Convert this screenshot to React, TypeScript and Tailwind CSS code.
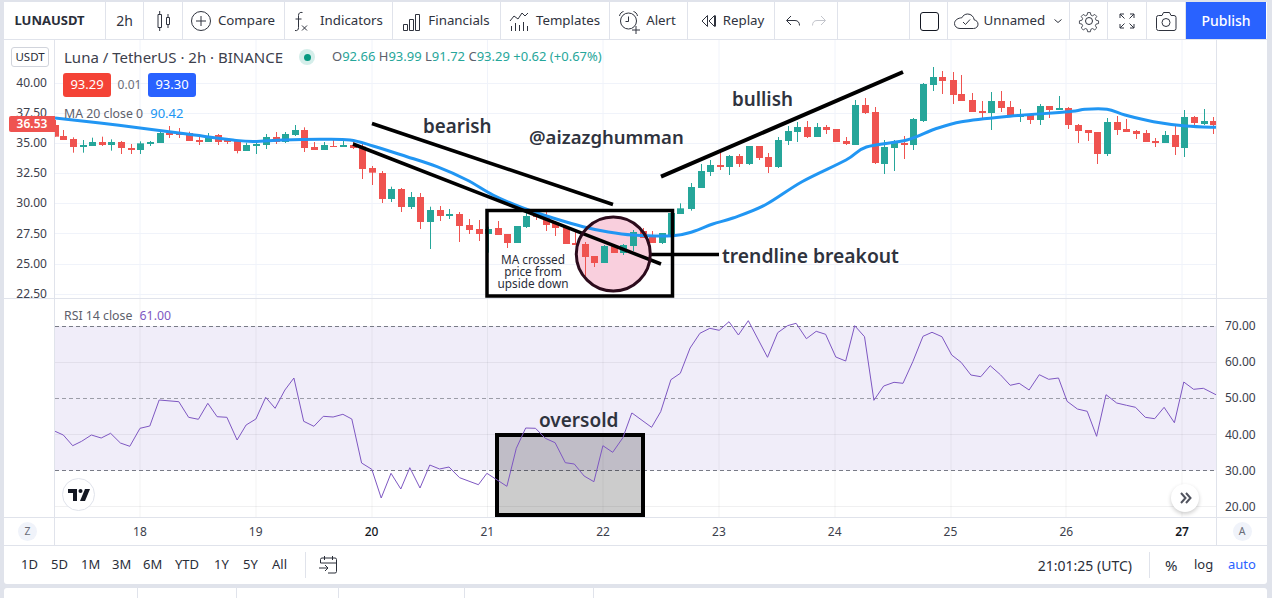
import React from "react";

type Row = [number, number, number, number, number, number];
const G = 1, R = 0;
const conv = (x0: number, sx: number, y0: number, sy: number, rows: Row[]) =>
  rows.map(([x, c, t, b, wt, wb]) => ({ x: Math.round(x0 + x / sx), c, t: y0 + t / sy, b: y0 + b / sy, wt: y0 + wt / sy, wb: y0 + wb / sy }));

const candles = [
  ...conv(0, 3, 100, 3, [
    [165, R, 75, 110, 60, 110], [190, R, 108, 120, 90, 120], [220, R, 117, 141, 112, 158], [248, G, 135, 141, 120, 158], [277, G, 126, 138, 113, 138],
    [305, R, 126, 135, 110, 138], [334, G, 126, 135, 118, 152], [364, R, 126, 144, 123, 162], [392, R, 144, 150, 132, 162], [421, G, 130, 150, 124, 162],
    [451, G, 126, 132, 123, 138], [479, G, 99, 129, 95, 129], [508, R, 99, 105, 78, 114], [537, R, 99, 105, 84, 114], [566, R, 99, 123, 95, 123],
    [596, R, 120, 126, 108, 135], [625, G, 108, 126, 99, 126], [653, R, 105, 126, 102, 135], [682, R, 120, 126, 114, 132], [712, R, 123, 153, 120, 160],
    [739, G, 135, 153, 128, 153], [769, G, 132, 138, 120, 162], [798, G, 111, 135, 102, 147], [827, R, 111, 126, 96, 132], [856, G, 102, 126, 96, 129],
    [884, G, 90, 105, 75, 108], [913, R, 90, 144, 82, 156], [943, R, 141, 150, 126, 150], [971, G, 135, 150, 126, 150], [1000, R, 138, 141, 114, 141],
    [1030, G, 135, 141, 123, 141], [1058, R, 135, 144, 126, 147],
  ]),
  ...conv(340, 3, 120, 3, [
    [67, R, 80, 147, 72, 177], [97, R, 144, 158, 138, 195], [125, R, 159, 237, 153, 249], [154, G, 207, 237, 200, 246], [184, R, 207, 261, 204, 276],
    [212, G, 231, 261, 216, 267], [241, R, 231, 306, 219, 327], [271, G, 270, 306, 260, 387], [299, R, 270, 288, 258, 303], [328, G, 282, 288, 267, 297],
    [358, R, 282, 318, 276, 366], [386, R, 315, 330, 297, 342], [416, R, 327, 342, 300, 363], [443, G, 327, 342, 320, 398], [473, R, 324, 345, 303, 345],
    [502, R, 342, 369, 342, 384], [530, G, 318, 369, 318, 369], [559, G, 288, 321, 273, 324], [589, R, 285, 291, 267, 300], [617, R, 288, 315, 270, 333],
    [646, R, 309, 324, 309, 348], [677, R, 321, 372, 321, 372], [704, R, 369, 375, 330, 375], [734, R, 372, 411, 366, 468], [763, R, 408, 429, 408, 441],
    [791, G, 378, 429, 375, 429], [821, R, 378, 399, 372, 399], [850, G, 375, 399, 372, 405], [878, G, 336, 378, 330, 393], [908, R, 333, 354, 324, 354],
    [937, R, 351, 369, 333, 369], [965, G, 339, 369, 339, 372], [994, G, 279, 345, 270, 345],
  ]),
  ...conv(640, 2.473, 60, 3, [
    [100, G, 445, 462, 430, 462], [125, G, 381, 447, 369, 452], [150, G, 333, 384, 312, 384], [172, G, 315, 336, 300, 348], [197, R, 315, 321, 276, 330],
    [221, G, 288, 321, 285, 345], [245, R, 288, 312, 282, 321], [269, G, 258, 312, 258, 315], [294, R, 258, 294, 258, 300], [316, R, 291, 321, 279, 339],
    [341, G, 240, 321, 231, 324], [366, G, 213, 243, 198, 255], [388, G, 201, 216, 186, 246], [413, R, 201, 231, 183, 234], [438, G, 201, 231, 189, 231],
    [461, R, 201, 210, 195, 222], [485, R, 207, 246, 207, 246], [510, R, 243, 252, 231, 255], [532, G, 135, 255, 120, 255], [557, R, 135, 159, 114, 162],
    [580, R, 156, 309, 141, 312], [604, G, 261, 312, 240, 342], [629, G, 249, 264, 240, 333], [652, R, 249, 255, 228, 297], [676, G, 177, 255, 174, 270],
    [701, G, 72, 183, 69, 186], [724, G, 51, 75, 21, 93], [748, R, 51, 63, 33, 102], [773, R, 60, 105, 36, 132], [795, R, 102, 123, 45, 123],
    [820, R, 120, 156, 99, 156], [845, R, 153, 159, 123, 177], [867, G, 123, 159, 96, 210], [892, R, 123, 144, 93, 156], [916, R, 141, 171, 123, 171],
    [939, G, 162, 171, 147, 186], [964, R, 162, 180, 162, 192], [988, G, 138, 180, 132, 195], [1011, R, 138, 150, 138, 174], [1036, G, 144, 150, 108, 150],
    [1058, R, 144, 195, 141, 207], [1083, R, 195, 213, 192, 249], [1107, R, 210, 219, 210, 243], [1130, R, 216, 282, 216, 312], [1155, G, 186, 282, 174, 288],
    [1180, R, 186, 210, 168, 225], [1202, R, 207, 216, 177, 216], [1226, R, 213, 222, 210, 237], [1251, R, 219, 246, 210, 246], [1274, R, 243, 249, 234, 261],
    [1298, G, 225, 249, 213, 249], [1323, R, 225, 261, 198, 285], [1346, G, 171, 264, 150, 291], [1370, R, 171, 189, 168, 201], [1394, G, 183, 192, 147, 195],
    [1418, R, 183, 195, 171, 222],
  ]),
];

const maPts: [number, number][] = [[55,118],[100,123],[140,128],[187,134],[233,140],[253,141.5],[283,140],[320,139.3],[350,140],[373,146],[407,156.7],[437,166.7],[467,180],[493,195],[523,208],[553,218],[583,226.7],[607,231.7],[633,235],[673,235.7],[692.6,231.7],[712.8,224],[733,218],[765,205],[802,181.7],[846,160],[866.4,147],[907,140],[935,129],[961.5,121.7],[1004,116.7],[1068.6,111.7],[1085,109.3],[1107,109.3],[1125,115],[1153.5,121.7],[1186,126],[1216,127.3]];
const ma = maPts.reduce((d, p, i, a) => {
  if (i === 0) return `M${p[0]} ${p[1]}`;
  const p0 = a[Math.max(0, i - 2)], p1 = a[i - 1], p3 = a[Math.min(a.length - 1, i + 1)];
  const c1x = p1[0] + (p[0] - p0[0]) / 6, c1y = p1[1] + (p[1] - p0[1]) / 6;
  const c2x = p[0] - (p3[0] - p1[0]) / 6, c2y = p[1] - (p3[1] - p1[1]) / 6;
  return `${d}C${c1x.toFixed(1)} ${c1y.toFixed(1)} ${c2x.toFixed(1)} ${c2y.toFixed(1)} ${p[0]} ${p[1]}`;
}, "");

const rsiA: [number, number][] = [[135,394],[155,405],[178,437],[200,424],[224,405],[248,414],[271,400],[295,429],[318,439],[343,385],[367,378],[390,300],[438,305],[462,352],[486,358],[509,310],[532,350],[556,352],[581,420],[603,375],[627,357],[651,292],[674,325],[698,270],[720,234],[744,364],[769,379],[792,349],[816,351],[840,343],[862,357],[886,489],[911,508],[934,594],[958,520],[982,567],[1004,503],[1029,564],[1053,495],[1077,507],[1100,501],[1126,533],[1172,554],[1193,520],[1242,559],[1265,445],[1288,384],[1312,385],[1336,415],[1360,428],[1385,488],[1407,492],[1431,528],[1455,545],[1477,437],[1501,457],[1526,413],[1548,339]];
const rsiB: [number, number][] = [[0,339],[48,382],[70,335],[95,239],[118,220],[142,144],[166,100],[190,85],[213,91],[237,65],[260,105],[284,62],[331,172],[356,98],[380,77],[401,70],[426,116],[450,94],[473,103],[498,171],[522,183],[544,77],[568,110],[591,301],[615,258],[640,247],[662,250],[686,185],[711,109],[733,97],[757,110],[781,165],[804,187],[828,225],[852,230],[875,197],[900,224],[924,256],[946,250],[970,270],[995,224],[1018,238],[1042,234],[1063,304],[1088,327],[1112,334],[1135,409],[1158,284],[1184,309],[1208,316],[1230,322],[1254,352],[1277,356],[1300,322],[1325,368],[1348,246],[1372,268],[1396,265],[1428,285]];
const rsi = [
  ...rsiA.map(([x, y]) => `${(x / 2.45).toFixed(1)},${(300 + y / 3).toFixed(1)}`),
  ...rsiB.map(([x, y]) => `${(632 + x / 2.443).toFixed(1)},${(300 + y / 3).toFixed(1)}`),
].join(" ");

const days = [140, 256, 372, 487.5, 603, 719, 835, 951, 1066, 1182];
const dayLabels = ["18", "19", "20", "21", "22", "23", "24", "25", "26", "27"];
const priceY = [83, 113, 143, 173, 203, 233, 264, 294];
const prices = ["40.00", "37.50", "35.00", "32.50", "30.00", "27.50", "25.00", "22.50"];
const rsiLabels = ["70.00", "60.00", "50.00", "40.00", "30.00", "20.00"];

const Ico = ({ children, w = 28 }: { children: React.ReactNode; w?: number }) => (
  <svg width={w} height={28} viewBox={`0 0 ${w} 28`} fill="none" stroke="currentColor" strokeWidth={1} className="shrink-0">{children}</svg>
);

const Cell = ({ w, children, className = "" }: { w: string; children?: React.ReactNode; className?: string }) => (
  <div className={`${w} h-full flex items-center justify-center border-r border-[#e0e3eb] shrink-0 ${className}`}>{children}</div>
);

const Annot = ({ className, children }: { className: string; children: React.ReactNode }) => (
  <div className={`absolute whitespace-nowrap text-[#2f333e] font-semibold ${className}`}>{children}</div>
);

export default function App() {
  return (
    <div className="w-[1272px] h-[598px] overflow-hidden bg-[#e0e3eb] pt-[2px] px-[4px] text-[#2f333e]" style={{ fontFamily: '"Noto Sans", "Liberation Sans", sans-serif' }}>
      <div className="w-[1263px] bg-white rounded-b-[3px]">
        {/* top toolbar */}
        <div className="h-[38px] flex border-b border-[#e0e3eb] text-[13.3px]">
          <Cell w="w-[102px]" className="pr-[10px]"><span className="font-bold text-[13px] text-[#2a2e39]">LUNAUSDT</span></Cell>
          <Cell w="w-[38px]"><span className="text-[14px]">2h</span></Cell>
          <Cell w="w-[39px]">
            <Ico><path d="M17.5 10.5h3v7h-3zM9 7.5h3.5v13H9zM19 7v3.5M19 17.5V21M10.7 4v3.5M10.7 20.5V24" /></Ico>
          </Cell>
          <Cell w="w-[102px]" className="gap-[3px] pr-[5px]">
            <Ico><circle cx="14" cy="14" r="9.5" /><path d="M14 9v10M9 14h10" /></Ico><span>Compare</span>
          </Cell>
          <Cell w="w-[108px]" className="gap-[5px] pr-[7px]">
            <Ico><path d="M15.5 5.5c-2.500-.6-4 .6-4 3v12c0 2.400-1.200 3.500-3.500 3M8.500 12H14.500M15 18.500l5 5M20 18.500l-5 5" /></Ico><span>Indicators</span>
          </Cell>
          <Cell w="w-[108px]" className="gap-[3px] pr-[6px]">
            <Ico><path d="M6.500 17.500h4v6h-4zM12.500 12.500h4v11h-4zM18.500 7.500h4v16h-4z" /></Ico><span>Financials</span>
          </Cell>
          <Cell w="w-[109px]" className="gap-[3px] pr-[5px]">
            <Ico><path d="M5 14l4-5 4 3 4-6 3 3 3-3" /><path d="M6.500 24v-5M10.500 24v-8M14.500 24v-6M18.500 24v-9M22.500 24v-5" /></Ico><span>Templates</span>
          </Cell>
          <Cell w="w-[78px]" className="gap-[3px] pr-[6px]">
            <Ico><circle cx="13.500" cy="14" r="8" /><path d="M13.500 9.500v5h-3M4.500 9c.5-2.500 2-4 4-4.500M18.500 4.500c2 .5 3.500 2 4 4.500" /><path d="M21 19v8M17 23h8" fill="none" /></Ico><span>Alert</span>
          </Cell>
          <Cell w="w-[87px]" className="gap-[3px] pr-[2px]">
            <Ico w={24}><path d="M11.500 8.500L6 14l5.500 5.500zM18.500 8.500L13 14l5.500 5.500zM19.500 8.500v11" /></Ico><span>Replay</span>
          </Cell>
          <Cell w="w-[63px]" className="gap-[6px]">
            <Ico w={20}><path d="M8 9l-4.500 4.500L8 18M4 13.500h8c3 0 4.500 2 4.500 5" /></Ico>
            <span className="text-[#c3c5cc]"><Ico w={20}><path d="M12 9l4.500 4.500L12 18M16 13.500H8c-3 0-4.500 2-4.500 5" /></Ico></span>
          </Cell>
          <Cell w="w-[72px]" />
          <Cell w="w-[38px]">
            <Ico><rect x="5.500" y="5.500" width="18" height="18" rx="2.500" stroke="#131722" strokeWidth={1} /></Ico>
          </Cell>
          <Cell w="w-[122px]" className="gap-[1px]">
            <Ico w={28}><path d="M8 21.500h13.500c2.800 0 4.500-2 4.500-4.300 0-2.200-1.600-4-3.700-4.200-.5-3.500-3.300-6-6.600-6-2.600 0-4.800 1.500-5.900 3.800C6.300 10.900 2.500 13 2.500 16.500c0 2.800 2.400 5 5.500 5z" /><path d="M11 15l2.500 2.500 4.500-5" /></Ico>
            <span className="ml-[3px] w-[65px]">Unnamed</span>
            <Ico w={16}><path d="M4.500 12.500L8 15.500l3.500-3" /></Ico>
          </Cell>
          <Cell w="w-[38px]">
            <Ico><path d="M12.400 4.500h3.200l.7 3 1.900.8 2.700-1.600 2.300 2.300-1.600 2.700.8 1.900 3 .7v3.200l-3 .7-.8 1.900 1.600 2.700-2.300 2.300-2.700-1.600-1.900.8-.7 3h-3.200l-.7-3-1.900-.8-2.700 1.600-2.300-2.300 1.600-2.700-.8-1.900-3-.7v-3.200l3-.7.8-1.900-1.600-2.700 2.300-2.300 2.700 1.600 1.900-.8z" transform="translate(14 14) scale(.84) translate(-14 -14.500)" /><circle cx="14" cy="14" r="3.500" /></Ico>
          </Cell>
          <Cell w="w-[39px]">
            <Ico><path d="M7 11V7h4M7 7l4.500 4.500M21 11V7h-4M21 7l-4.500 4.500M7 17v4h4M7 21l4.500-4.500M21 17v4h-4M21 21l-4.500-4.500" /></Ico>
          </Cell>
          <Cell w="w-[39px]">
            <Ico><path d="M4.500 10.500a2 2 0 012-2h3.500l1.500-3h6l1.500 3h3a2 2 0 012 2v11a2 2 0 01-2 2h-15.500a2 2 0 01-2-2z" /><circle cx="14" cy="15.500" r="4" /></Ico>
          </Cell>
          <div className="w-[80px] h-full bg-[#2962ff] text-white text-[14px] flex items-center justify-center font-medium">Publish</div>
        </div>

        {/* price pane */}
        <div className="flex h-[259px] border-b border-[#e0e3eb]">
          <div className="relative w-[51px] shrink-0 border-r border-[#e0e3eb] pt-[28px] flex flex-col items-end pr-[7px] text-[12px] text-[#3c404c]">
            {prices.map((p) => <div key={p} className="h-[30.1px] shrink-0 flex items-center leading-none">{p}</div>)}
            <div className="absolute left-[7px] top-[7px] w-[38px] h-[20px] border border-[#d1d4dc] rounded-[3px] flex items-center justify-center text-[11.5px] bg-white text-[#2a2e39]">USDT</div>
            <div className="absolute left-[5px] top-[76px] w-[46px] h-[16px] bg-[#ef5350] text-white text-[12px] font-semibold flex items-center justify-center z-10 rounded-l-[2px]">36.53</div>
          </div>
          <div className="relative w-[1161px] shrink-0 overflow-hidden">
            <svg width={1161} height={258} viewBox="55 40 1161 258" className="block">
              {priceY.map((y) => <line key={y} x1={55} x2={1216} y1={y + 0.5} y2={y + 0.5} stroke="#f0f3fa" />)}
              {days.map((x) => <line key={x} x1={x} x2={x} y1={40} y2={298} stroke="#f0f3fa" />)}
              <circle cx={613.3} cy={254} r={37} fill="#f9cfdd" />
              {candles.map((k, i) => {
                const col = k.c ? "#26a69a" : "#ef5350";
                return (
                  <g key={i} fill={col}>
                    <rect x={k.x} y={k.wt} width={1} height={k.wb - k.wt} />
                    <rect x={k.x - 3} y={k.t} width={7} height={Math.max(1, k.b - k.t)} />
                  </g>
                );
              })}
              <path d={ma} fill="none" stroke="#2196f3" strokeWidth={3} strokeLinejoin="round" />
              <g stroke="#000" fill="none">
                <line x1={372} y1={123.500} x2={613} y2={204.500} strokeWidth={3.500} />
                <line x1={353} y1={144} x2={661} y2={264} strokeWidth={3.500} />
                <line x1={661} y1={176.700} x2={903} y2={72} strokeWidth={4} />
                <line x1={650} y1={254.500} x2={719} y2={254.500} strokeWidth={3.500} />
                <rect x={487} y={210.500} width={185.500} height={85.500} strokeWidth={3.500} />
                <circle cx={613.300} cy={254} r={37} stroke="#2c0b1c" strokeWidth={3} />
              </g>
            </svg>
            <div className="absolute left-[9px] top-[7px] flex items-center h-[20px]">
              <span className="text-[15px] text-[#3c404c] w-[235px] whitespace-nowrap">Luna / TetherUS · 2h · BINANCE</span>
              <span className="w-[16px] h-[16px] rounded-full bg-[#d5eeea] flex items-center justify-center"><span className="w-[7px] h-[7px] rounded-full bg-[#089981]" /></span>
              <span className="ml-[17px] text-[13px] text-[#26a69a] whitespace-nowrap">
                <span className="text-[#5d606b]">O</span>92.66 <span className="text-[#5d606b]">H</span>93.99 <span className="text-[#5d606b]">L</span>91.72 <span className="text-[#5d606b]">C</span>93.29 +0.62 (+0.67%)
              </span>
            </div>
            <div className="absolute left-[8px] top-[33px] flex items-center text-[13px] text-white">
              <div className="w-[48px] h-[24px] rounded-[3px] bg-[#f44336] flex items-center justify-center">93.29</div>
              <div className="w-[37px] text-center text-[12px] text-[#6a6d78]">0.01</div>
              <div className="w-[48px] h-[24px] rounded-[3px] bg-[#2962ff] flex items-center justify-center">93.30</div>
            </div>
            <div className="absolute left-[9px] top-[64px] text-[12.3px] text-[#5d606b] whitespace-nowrap">MA 20 close 0 <span className="ml-[4px] text-[13px] text-[#2196f3]">90.42</span></div>
            <Annot className="left-[368px] top-[72px] text-[18.8px] leading-[28px]">bearish</Annot>
            <Annot className="left-[474px] top-[83px] text-[18.5px] leading-[28px]">@aizazghumman</Annot>
            <Annot className="left-[677px] top-[45px] text-[18.8px] leading-[28px]">bullish</Annot>
            <Annot className="left-[667px] top-[202px] text-[19.3px] leading-[28px]">trendline breakout</Annot>
            <div className="absolute left-[434px] top-[213px] w-[88px] text-center text-[11.8px] leading-[12px] text-[#2a2e39]">MA crossed<br />price from<br />upside down</div>
          </div>
          <div className="flex-1 border-l border-[#e0e3eb]" />
        </div>

        {/* RSI pane */}
        <div className="flex h-[218px]">
          <div className="w-[51px] shrink-0 border-r border-[#e0e3eb]" />
          <div className="relative w-[1161px] shrink-0 overflow-hidden">
            <svg width={1161} height={218} viewBox="55 299 1161 218" className="block">
              <rect x={55} y={326} width={1161} height={144.500} fill="#f0edf9" />
              {[362.500, 434.500, 506.500].map((y) => <line key={y} x1={55} x2={1216} y1={y} y2={y} stroke="#2a2e39" strokeOpacity={0.07} />)}
              {days.map((x) => <line key={x} x1={x} x2={x} y1={299} y2={517} stroke="#2a2e39" strokeOpacity={0.06} />)}
              <g stroke="#787b86" strokeDasharray="4 3">
                <line x1={55} x2={1216} y1={326.500} y2={326.500} />
                <line x1={55} x2={1216} y1={398.500} y2={398.500} strokeOpacity={0.7} />
                <line x1={55} x2={1216} y1={470.500} y2={470.500} />
              </g>
              <rect x={497} y={435} width={146} height={80} fill="#000" fillOpacity={0.2} stroke="#000" strokeWidth={4} />
              <polyline points={rsi} fill="none" stroke="#7e57c2" strokeWidth={1} />
            </svg>
            <div className="absolute left-[9px] top-[8px] text-[12.3px] text-[#5d606b] whitespace-nowrap">RSI 14 close <span className="ml-[4px] text-[#7e57c2]">61.00</span></div>
            <Annot className="left-[484px] top-[107px] text-[19px] leading-[28px]">oversold</Annot>
            <div className="absolute left-[7px] top-[179px] w-[33px] h-[33px] rounded-full bg-white border border-[#e0e3eb] flex items-center justify-center">
              <svg width={22} height={14} viewBox="0 0 22 14"><path d="M0 1h9v12H5V5H0z" fill="#131722" /><circle cx={12.500} cy={3} r={2} fill="#131722" /><path d="M17 1h5l-5 12h-5z" fill="#131722" /></svg>
            </div>
            <div className="absolute left-[1116px] top-[185px] w-[28px] h-[28px] rounded-full bg-white shadow-[0_2px_4px_rgba(0,0,0,0.2)] flex items-center justify-center text-[#50535e]">
              <svg width={14} height={14} viewBox="0 0 14 14" fill="none" stroke="currentColor" strokeWidth={2}><path d="M3 2l4.500 5L3 12M8 2l4.500 5L8 12" /></svg>
            </div>
          </div>
          <div className="flex-1 border-l border-[#e0e3eb] pt-[8.500px] pl-[8px] text-[12px] text-[#3c404c]">
            {rsiLabels.map((p) => <div key={p} className="h-[36.300px] shrink-0 flex items-center leading-none">{p}</div>)}
          </div>
        </div>

        {/* time axis */}
        <div className="flex h-[28px] border-t border-[#e0e3eb] text-[12px] text-[#3c404c]">
          <div className="w-[51px] shrink-0 border-r border-[#e0e3eb] flex items-center justify-center pr-[3px]">
            <div className="w-[19px] h-[19px] rounded-full bg-[#f0f3fa] flex items-center justify-center text-[10.500px] text-[#6a6d78]">Z</div>
          </div>
          <div className="w-[1161px] shrink-0 flex pl-[27px] items-center">
            {dayLabels.map((d) => <div key={d} className={`w-[115.800px] shrink-0 text-center ${d === "27" ? "font-semibold text-[#131722]" : d === "20" ? "font-medium text-[#131722]" : ""}`}>{d}</div>)}
          </div>
          <div className="flex-1 border-l border-[#e0e3eb] flex items-center justify-center">
            <div className="w-[19px] h-[19px] rounded-full bg-[#f0f3fa] flex items-center justify-center text-[10.500px] text-[#6a6d78]">A</div>
          </div>
        </div>

        {/* bottom bar */}
        <div className="flex h-[39px] border-t border-[#e0e3eb] items-center text-[13px] text-[#2a2e39]">
          <div className="flex ml-[17px] w-[282px]">
            {[["1D", 30], ["5D", 30], ["1M", 31], ["3M", 31], ["6M", 32], ["YTD", 39], ["1Y", 29], ["5Y", 29], ["All", 20]].map(([t, w]) => (
              <span key={t as string} className="text-left" style={{ width: w as number }}>{t}</span>
            ))}
          </div>
          <div className="w-px h-[26px] bg-[#e0e3eb] ml-[2px]" />
          <div className="ml-[11px] text-[#2a2e39]">
            <Ico w={22}><path d="M3.500 12V8.500a1.500 1.500 0 011.500-1.500h13a1.500 1.500 0 011.500 1.500v12a1.500 1.500 0 01-1.500 1.500h-7M3.500 12h16M7.500 5v4M15.500 5v4M2 17h9M8 14l3 3-3 3" /></Ico>
          </div>
          <div className="flex-1" />
          <span className="text-[14px] text-[#2a2e39] mr-[1px]">21:01:25 (UTC)</span>
          <div className="w-px h-[26px] bg-[#e0e3eb] ml-[16px]" />
          <span className="ml-[15px] w-[29px] text-[15px]">%</span>
          <span className="w-[34px]">log</span>
          <span className="w-[39px] text-[#2962ff]">auto</span>
        </div>
      </div>

      {/* lower strip */}
      <div className="mt-[4px] h-[20px] w-[1263px] bg-white rounded-t-[3px] flex">
        {[134, 99, 102, 126, 129].map((w) => <div key={w} className="h-full border-r border-[#e0e3eb]" style={{ width: w }} />)}
      </div>
    </div>
  );
}
